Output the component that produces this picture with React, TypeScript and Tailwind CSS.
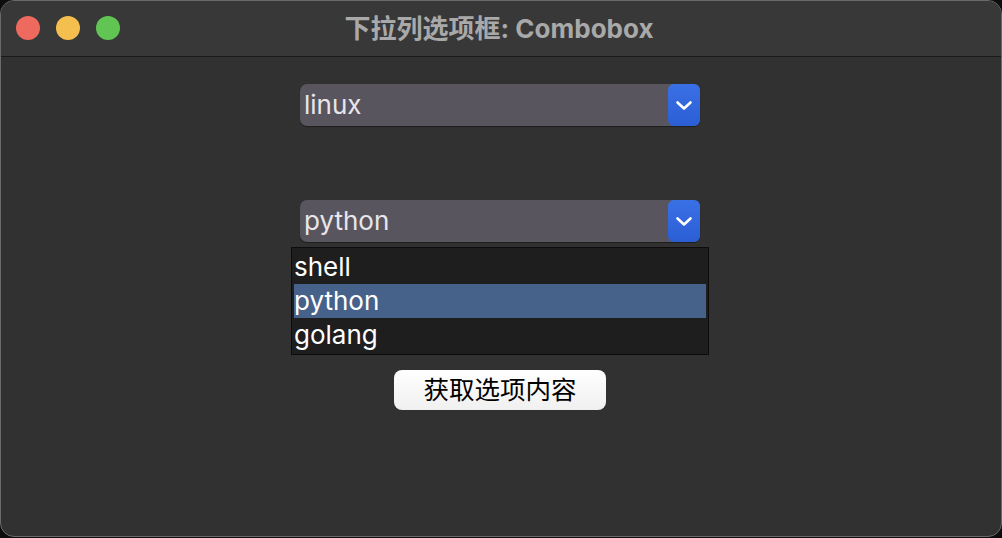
import React from 'react'

const font = { fontFamily: 'Inter, "Noto Sans CJK SC", sans-serif' }

function Chevron() {
  return (
    <svg width="18" height="11" viewBox="0 0 18 11" fill="none">
      <path d="M2.5 2.5 L9 8.5 L15.5 2.5" stroke="white" strokeWidth="2.6" strokeLinecap="round" strokeLinejoin="round" />
    </svg>
  )
}

function Combo({ value }: { value: string }) {
  return (
    <div className="flex h-[42px] w-[400px] items-stretch rounded-[7px] bg-[#59555f] shadow-[0_1px_1px_rgba(0,0,0,0.4)]">
      <div className="flex-1 pl-[4px] pt-[5px] text-[26px] leading-[32px] text-[#e8e6ea]">{value}</div>
      <div className="flex w-[32px] items-center justify-center rounded-[6px] bg-gradient-to-b from-[#3a70e6] to-[#2b5ed4]">
        <Chevron />
      </div>
    </div>
  )
}

export default function App() {
  const options = ['shell', 'python', 'golang']
  return (
    <main className="h-[538px] w-[1002px] bg-[#0d0d0d]" style={font}>
      <div className="flex h-[537px] w-[1002px] flex-col overflow-hidden rounded-[14px] border border-[#6a6a6a] bg-[#313131]">
        <div className="relative flex h-[56px] shrink-0 items-center justify-center border-b border-[#1a1a1a] bg-[#383838]">
          <div className="absolute left-[15px] top-[15px] flex gap-[16px]">
            <span className="h-[24px] w-[24px] rounded-full bg-[#ee6a5f]" />
            <span className="h-[24px] w-[24px] rounded-full bg-[#f5bf4f]" />
            <span className="h-[24px] w-[24px] rounded-full bg-[#61c554]" />
          </div>
          <h1 className="pr-[4px] text-[26px] font-bold text-[#a9a9a9]">下拉列选项框: Combobox</h1>
        </div>
        <div className="flex flex-col items-center pr-[2px] pt-[27px]">
          <Combo value="linux" />
          <div className="relative mt-[74px]">
            <Combo value="python" />
            <ul className="absolute left-[-9px] top-[47px] w-[418px] border border-[#0c0c0c] bg-[#1e1e1e] p-[2px]">
              {options.map((o) => (
                <li
                  key={o}
                  className={`h-[34px] text-[26px] leading-[34px] text-white ${o === 'python' ? 'bg-[#46618a]' : ''}`}
                >
                  {o}
                </li>
              ))}
            </ul>
          </div>
          <button className="mt-[128px] h-[40px] w-[212px] rounded-[8px] bg-gradient-to-b from-white to-[#f0f0f0] text-[25.5px] text-black">
            获取选项内容
          </button>
        </div>
      </div>
    </main>
  )
}
